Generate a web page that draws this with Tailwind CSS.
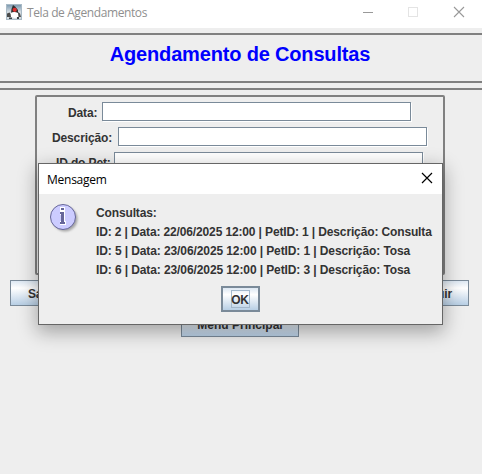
<!DOCTYPE html>
<html lang="pt-BR">
<head>
<meta charset="utf-8">
<title>Tela de Agendamentos</title>
<script src="https://cdn.jsdelivr.net/npm/@tailwindcss/browser@4"></script>
</head>
<body class="relative flex h-[474px] w-[482px] flex-col overflow-hidden bg-[#eeeeee] font-['Liberation_Sans',Arial,sans-serif] text-[12px] font-bold leading-[15px] tracking-[-0.135px] text-[#333333]">
  <header class="flex h-[28px] shrink-0 items-center bg-white pl-[6px] font-['Open_Sans','Noto_Sans',sans-serif] font-normal text-[#8f8f8f]">
    <svg class="mt-[-4px] h-4 w-4" viewBox="0 0 16 16">
      <defs><linearGradient id="sky" x2="0" y2="1"><stop stop-color="#7896ad"/><stop offset=".5" stop-color="#d5dde3"/><stop offset="1" stop-color="#d3dbe0"/></linearGradient></defs>
      <rect x=".5" y=".5" width="15" height="15" fill="url(#sky)" stroke="#a9bac6"/>
      <path d="M7 1L9 2.500L12 6L12 9L5 9L5.500 5Z" fill="#303030"/>
      <path d="M1 9.500L3.500 8.500L5 10V13H1ZM12 8L14 9.500L15 13H12Z" fill="#4a4a4a"/>
      <path d="M4.500 9Q8 7 12 9L12.500 13L9 14L5 13Z" fill="#fff"/>
      <path d="M3 13.500H6V15H3ZM11 13H13V15H11Z" fill="#3b4248"/>
      <circle cx="8.700" cy="5.800" r="2.100" fill="#e02f2f"/>
    </svg>
    <span class="mt-[-4px] ml-[5px] whitespace-nowrap tracking-[-0.4px]">Tela de Agendamentos</span>
    <svg class="mt-[-4px] mr-[16px] ml-auto h-[12px] w-[104px] shrink-0" viewBox="0 0 104 12" fill="none">
      <path d="M1 6.5H11" stroke="#999"/>
      <rect x="46.500" y="1.500" width="9" height="9" stroke="#e4e4e4"/>
      <path d="M92 1L102 11M102 1L92 11" stroke="#999" stroke-width="1.100"/>
    </svg>
  </header>
  <section class="mt-[5px] h-[50px] shrink-0 border-y-2 border-[#808080] pt-[7px] text-center">
    <h1 class="text-[20px] leading-[24px] tracking-[-0.17px] whitespace-nowrap text-[#0000ff]"><span class="ml-[-2px]">Agendamento de Consultas</span></h1>
  </section>
  <section class="mt-[5px] shrink-0 border-t-2 border-[#808080] pt-[5px]">
    <div class="ml-[35px] flex h-[180px] w-[410px] flex-col gap-[6px] rounded-[2px] border-2 border-[#808080] pt-[5px]">
      <label class="flex h-[19px] items-center pl-[31px]"><span class="w-[34px] pt-[4px] whitespace-nowrap">Data:</span><span class="h-[19px] w-[309px] border border-[#7a8a99] bg-white shadow-[1px_1px_0_white]"></span></label>
      <label class="flex h-[19px] items-center pl-[15px]"><span class="w-[66px] pt-[4px] whitespace-nowrap">Descrição:</span><span class="h-[19px] w-[309px] border border-[#7a8a99] bg-white shadow-[1px_1px_0_white]"></span></label>
      <label class="flex h-[19px] items-center pl-[19px]"><span class="w-[58px] pt-[4px] whitespace-nowrap">ID do Pet:</span><span class="h-[19px] w-[309px] border border-[#7a8a99] bg-white shadow-[1px_1px_0_white]"></span></label>
    </div>
    <div class="mt-[5px] flex justify-between pr-[13px] pl-[10px]">
      <button class="h-[26px] w-[73px] border border-[#7a8a99] bg-linear-to-b from-[#dde8f3] via-white via-30% to-[#b8cfe5] pt-[2px] pr-[2px] text-center">Salvar</button>
      <button class="h-[26px] w-[73px] border border-[#7a8a99] bg-linear-to-b from-[#dde8f3] via-white via-30% to-[#b8cfe5] pt-[2px] text-center">Excluir</button>
    </div>
    <button class="mt-[5px] ml-[181px] block h-[26px] w-[118px] border border-[#7a8a99] bg-linear-to-b from-[#dde8f3] via-white via-30% to-[#b8cfe5] pt-[3px] tracking-normal whitespace-nowrap">Menu Principal</button>
  </section>

  <div role="dialog" class="absolute top-[163px] left-[38px] flex h-[162px] w-[405px] flex-col border border-[#666666] bg-[#eeeeee] shadow-[0_6px_18px_1px_rgba(0,0,0,0.32)]">
    <div class="flex h-[30px] shrink-0 items-center justify-between bg-white pr-[9px] pl-[8px] font-['Open_Sans','Noto_Sans',sans-serif] font-normal text-black">
      <span class="tracking-[-0.25px]">Mensagem</span>
      <svg class="mt-[-2px] h-[12px] w-[12px]" viewBox="0 0 12 12"><path d="M1 1L11 11M11 1L1 11" stroke="#000" stroke-width="1.200"/></svg>
    </div>
    <div class="flex pt-[9px] pl-[10px]">
      <svg class="h-[32px] w-[32px] shrink-0" viewBox="0 0 32 32">
        <defs><filter id="soft"><feGaussianBlur stdDeviation="1.300"/></filter></defs>
        <circle cx="16" cy="16" r="12.500" fill="#777" opacity=".6" filter="url(#soft)"/>
        <circle cx="14" cy="14" r="12.500" fill="#ccccff" stroke="#666699"/>
        <path d="M11 4H16V8H11ZM11 8H16V18H17V22H11V18H12V12H11Z" fill="#fff"/>
        <path d="M12 5H15V7H12ZM11 9H15V19H16V21H11V19H12V11H11Z" fill="#666699"/>
      </svg>
      <div class="mt-px ml-[15px] -mb-px flex flex-col whitespace-nowrap leading-[19px]">
        <span>Consultas:</span>
        <span>ID: 2 | Data: 22/06/2025 12:00 | PetID: 1 | Descrição: Consulta</span>
        <span class="tracking-[-0.1px]">ID: 5 | Data: 23/06/2025 12:00 | PetID: 1 | Descrição: Tosa</span>
        <span class="tracking-[-0.1px]">ID: 6 | Data: 23/06/2025 12:00 | PetID: 3 | Descrição: Tosa</span>
      </div>
    </div>
    <button class="mt-[7px] ml-[182px] flex h-[26px] w-[39px] items-center justify-center border-2 border-[#7a8a99] bg-linear-to-b from-[#dde8f3] via-white via-30% to-[#b8cfe5]"><span class="h-[18px] w-[19px] border border-[#a3b8cc] text-center leading-[18px]"><span class="-ml-px">OK</span></span></button>
  </div>
</body>
</html>
